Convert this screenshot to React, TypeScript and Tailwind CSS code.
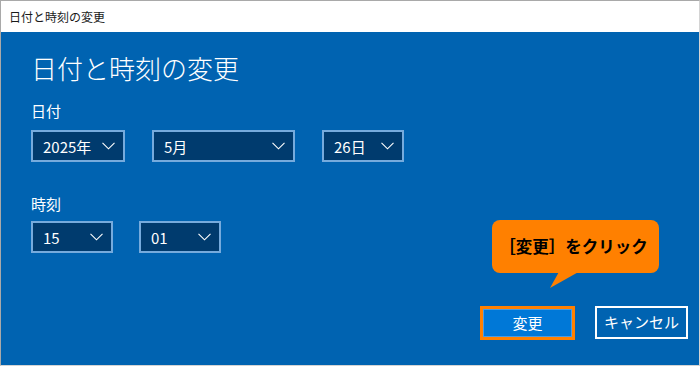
import React from "react";

interface ComboProps {
  label: string;
  width: string;
}

const Chevron: React.FC = () => (
  <svg width="13" height="8" viewBox="0 0 13 8" fill="none">
    <path d="M0.5 0.8 L6.5 6.8 L12.5 0.8" stroke="#ffffff" strokeWidth="1.1" />
  </svg>
);

const Combo: React.FC<ComboProps> = ({ label, width }) => (
  <div
    className={`${width} h-[32px] border-2 border-[#76abdd] bg-[#003b6e] flex items-center justify-between pl-[10px] pr-[8px] text-white text-[15px]`}
  >
    <span className="leading-none">{label}</span>
    <Chevron />
  </div>
);

const App: React.FC = () => {
  return (
    <div
      className="w-[700px] h-[366px] flex flex-col border border-[#a9a9a9] border-r-[#d4d4d4] border-b-[#d4d4d4] bg-white"
      style={{ fontFamily: '"Noto Sans CJK JP", "Noto Sans", sans-serif' }}
    >
      <div className="h-[31px] flex items-center pl-[8px] text-[12px] text-[#1a1a1a]">
        日付と時刻の変更
      </div>
      <div className="relative flex-1 bg-[#0063b1] flex flex-col pl-[30px] pr-[11px] pt-[20px] pb-[25px] text-white">
        <h1 className="text-[26px] leading-[32px] font-light">日付と時刻の変更</h1>
        <div className="mt-[17px] text-[15px] leading-[20px]">日付</div>
        <div className="mt-[9px] flex gap-[27px]">
          <Combo label="2025年" width="w-[94px]" />
          <Combo label="5月" width="w-[143px]" />
          <Combo label="26日" width="w-[82px]" />
        </div>
        <div className="mt-[32px] text-[15px] leading-[20px]">時刻</div>
        <div className="mt-[7px] flex gap-[26px]">
          <Combo label="15" width="w-[82px]" />
          <Combo label="01" width="w-[82px]" />
        </div>
        <div className="mt-auto flex justify-end gap-[20px]">
          <div className="w-[95px] h-[34px] border-[3px] border-[#ff8000] bg-[#0078d7] flex items-center justify-center text-[15px]">
            <span className="w-full h-full border border-[#4b9be0] flex items-center justify-center">変更</span>
          </div>
          <div className="w-[93px] h-[33px] border-2 border-white flex items-center justify-center text-[15px]">
            キャンセル
          </div>
        </div>
        <div className="absolute left-[491px] top-[188px]">
          <div className="w-[167px] h-[53px] bg-[#ff8000] rounded-[8px] flex items-center justify-center pr-[4px] text-black text-[16.5px] font-bold">
            ［変更］をクリック
          </div>
          <svg className="absolute left-[56px] top-[50px]" width="36" height="20" viewBox="0 0 36 20">
            <polygon points="12,0 34,0 2,18" fill="#ff8000" />
          </svg>
        </div>
      </div>
    </div>
  );
};

export default App;
